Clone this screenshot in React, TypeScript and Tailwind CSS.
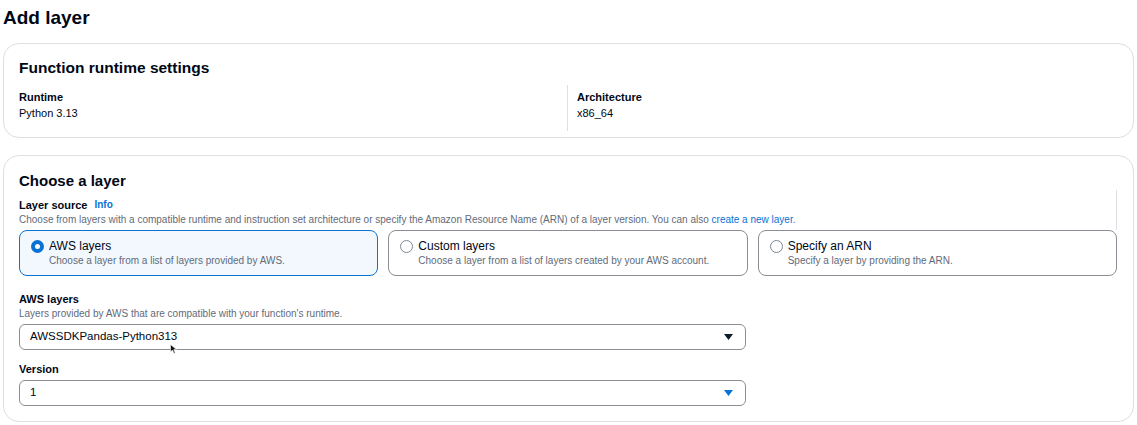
import React from 'react';

const font = { fontFamily: '"Liberation Sans", Arial, sans-serif' };

const Caret = ({ color }: { color: string }) => (
  <svg width="9" height="6" viewBox="0 0 9 6">
    <path d="M0 0 L9 0 L4.5 6 Z" fill={color} />
  </svg>
);

const Tile = ({
  title,
  desc,
  selected,
}: {
  title: string;
  desc: string;
  selected?: boolean;
}) => (
  <div
    className={`flex-1 h-[46px] rounded-[8px] flex items-start gap-[5px] pl-[11px] pt-[8px] ${
      selected ? 'border-[1.5px] border-[#0972d3] bg-[#f2f8fd]' : 'border border-[#8c8c94] bg-white'
    }`}
  >
    <div
      className={`mt-[1px] w-[13px] h-[13px] rounded-full shrink-0 ${
        selected ? 'border-[4px] border-[#0972d3] bg-white' : 'border border-[#7d8998] bg-white'
      }`}
    />
    <div className="flex flex-col">
      <span className="text-[12px] leading-[15px] text-[#000716]">{title}</span>
      <span className="text-[10px] leading-[14px] text-[#5f6b7a]">{desc}</span>
    </div>
  </div>
);

export default function App() {
  return (
    <div className="w-[1137px] h-[425px] bg-white overflow-hidden relative" style={font}>
      <div className="px-[3px]">
        <h1 className="text-[19px] font-bold leading-[28px] text-[#000716] pt-[4px] h-[43px]">
          Add layer
        </h1>

        {/* Function runtime settings */}
        <div className="h-[95px] border border-[#dcdfe3] rounded-[16px] px-[15px] pt-[14px]">
          <h2 className="text-[15.5px] font-bold leading-[20px] text-[#000716]">
            Function runtime settings
          </h2>
          <div className="flex mt-[7px]">
            <div className="w-[548px] pt-[4px]">
              <div className="text-[11px] font-bold leading-[16px] text-[#000716]">Runtime</div>
              <div className="text-[11px] leading-[16px] text-[#000716]">Python 3.13</div>
            </div>
            <div className="border-l border-[#dcdfe3] h-[46px] pl-[9px] pt-[4px]">
              <div className="text-[11px] font-bold leading-[16px] text-[#000716]">Architecture</div>
              <div className="text-[11px] leading-[16px] text-[#000716]">x86_64</div>
            </div>
          </div>
        </div>

        {/* Choose a layer */}
        <div className="mt-[17px] h-[267px] border border-[#dcdfe3] rounded-[16px] pl-[15px] pr-[16px] pt-[14px]">
          <h2 className="text-[15px] font-bold leading-[22px] text-[#000716]">Choose a layer</h2>
          <div className="border-r border-[#dcdfe3] pt-[7px] pb-[4px] -mt-[2px]">
            <div className="flex items-center gap-[7px] leading-[16px]">
              <span className="text-[11px] font-bold text-[#000716]">Layer source</span>
              <span className="text-[10px] font-bold text-[#0972d3]">Info</span>
            </div>
            <div className="text-[10px] leading-[13px] text-[#5f6b7a]">
              Choose from layers with a compatible runtime and instruction set architecture or specify the Amazon Resource Name (ARN) of a layer version. You can also{' '}
              <span className="text-[#0972d3]">create a new layer</span>.
            </div>
          </div>
          <div className="flex gap-[10px]">
            <Tile selected title="AWS layers" desc="Choose a layer from a list of layers provided by AWS." />
            <Tile title="Custom layers" desc="Choose a layer from a list of layers created by your AWS account." />
            <Tile title="Specify an ARN" desc="Specify a layer by providing the ARN." />
          </div>

          <div className="mt-[15px] w-[727px]">
            <div className="text-[11px] font-bold leading-[16px] text-[#000716]">AWS layers</div>
            <div className="text-[10px] leading-[14px] text-[#5f6b7a]">
              Layers provided by AWS that are compatible with your function's runtime.
            </div>
            <div className="mt-[3px] h-[26px] border border-[#8c8c94] rounded-[6px] flex items-center justify-between pl-[10px] pr-[12px]">
              <span className="text-[11.5px] text-[#000716]">AWSSDKPandas-Python313</span>
              <Caret color="#0f1b2a" />
            </div>
            <div className="mt-[11px] text-[11px] font-bold leading-[16px] text-[#000716]">Version</div>
            <div className="mt-[3px] h-[26px] border border-[#8c8c94] rounded-[6px] flex items-center justify-between pl-[10px] pr-[12px]">
              <span className="text-[11.5px] text-[#000716]">1</span>
              <Caret color="#0972d3" />
            </div>
          </div>
        </div>
      </div>

      {/* mouse pointer */}
      <svg className="absolute left-[170px] top-[344px]" width="7" height="10" viewBox="0 0 7 10">
        <path d="M0.5 0.5 L0.5 8 L2.5 6 L4 9.5 L5.2 9 L3.8 5.6 L6.5 5.6 Z" fill="#111" stroke="#fff" strokeWidth="0.6" />
      </svg>
    </div>
  );
}
